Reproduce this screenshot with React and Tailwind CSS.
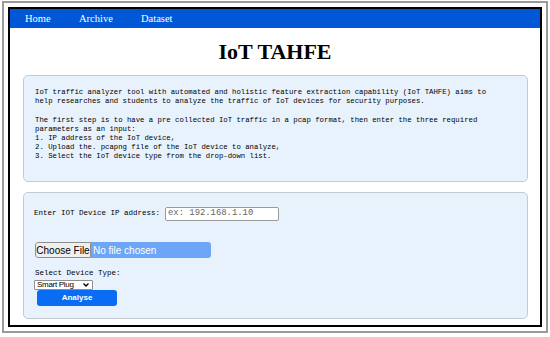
import React from 'react';

const NAV = ['Home', 'Archive', 'Dataset'];

const INTRO = [
  'IoT traffic analyzer tool with automated and holistic feature extraction capability (IoT TAHFE) aims to',
  'help researches and students to analyze the traffic of IoT devices for security purposes.',
  '',
  'The first step is to have a pre collected IoT traffic in a pcap format, then enter the three required',
  'parameters as an input:',
  '1. IP address of the IoT device,',
  '2. Upload the. pcapng file of the IoT device to analyze,',
  '3. Select the IoT device type from the drop-down list.',
];

const mono = { fontFamily: '"Liberation Mono", "Courier New", monospace' };

export default function App() {
  return (
    <div className="w-[550px] h-[337px] bg-white pl-[2px] pt-[1px]">
      <div className="w-[546px] h-[332px] border-2 border-[#9a9a9a] p-[4px]">
        <div className="h-full border-2 border-black flex flex-col">
          <nav className="h-[19px] bg-[#0058d6] flex items-center pl-[15px] font-['Liberation_Serif',serif] text-[10.5px] text-white">
            <span className="w-[54px]">{NAV[0]}</span>
            <span className="w-[62px]">{NAV[1]}</span>
            <span>{NAV[2]}</span>
          </nav>

          <div className="h-[47px] flex items-center justify-center">
            <h1 className="font-['Liberation_Serif',serif] font-bold text-[22px] leading-none text-black">IoT TAHFE</h1>
          </div>

          <section className="ml-[13px] mr-[12px] h-[107px] rounded-[5px] border border-[#c3cad2] bg-[#e8f2fd] pl-[11px] pt-[12px]">
            <div className="text-[7.3px] leading-[9.2px] text-black" style={mono}>
              {INTRO.map((line, i) => (
                <div key={i} className="h-[9.2px] whitespace-pre">{line}</div>
              ))}
            </div>
          </section>

          <section className="mt-[10px] ml-[13px] mr-[12px] h-[127px] rounded-[5px] border border-[#c3cad2] bg-[#e8f2fd] pl-[10px] pt-[14px]">
            <div className="flex items-center h-[14px]">
              <span className="text-[7.5px] text-black w-[131px] whitespace-nowrap" style={mono}>Enter IOT Device IP address:</span>
              <div className="w-[114px] h-[14px] bg-white border border-[#9a9a9a] rounded-[2px] flex items-center pl-[2px]">
                <span className="text-[8.9px] text-[#666] whitespace-nowrap" style={mono}>ex: 192.168.1.10</span>
              </div>
            </div>

            <div className="mt-[21px] flex h-[16px] w-[176px] ml-[1px] rounded-[3px] overflow-hidden font-['Liberation_Sans',sans-serif] text-[10px] whitespace-nowrap">
              <div className="w-[56px] shrink-0 bg-[#efefef] border border-[#8f8f8f] rounded-l-[3px] flex items-center justify-center text-black">Choose File</div>
              <div className="flex-1 bg-[#6ea6f7] flex items-center pl-[2px] text-white">No file chosen</div>
            </div>

            <div className="mt-[11px] ml-[1px] text-[7.5px] leading-[9px] text-black" style={mono}>Select Device Type:</div>
            <div className="mt-[2px] w-[59px] h-[10px] border border-[#8f8f8f] bg-white flex items-center justify-between pl-[2px] pr-[3px] rounded-[1px]">
              <span className="font-['Liberation_Sans',sans-serif] text-[8px] tracking-[-0.3px] text-black leading-none whitespace-nowrap">Smart Plug</span>
              <svg width="6" height="4" viewBox="0 0 6 4"><path d="M0.5 0.5 L3 3 L5.5 0.5" fill="none" stroke="black" strokeWidth="1.3" /></svg>
            </div>
            <div className="ml-[3px] w-[80px] h-[16px] rounded-[3px] bg-[#0a6cf2] flex items-center justify-center font-['Liberation_Sans',sans-serif] text-[8px] font-bold text-white">
              Analyse
            </div>
          </section>
        </div>
      </div>
    </div>
  );
}
